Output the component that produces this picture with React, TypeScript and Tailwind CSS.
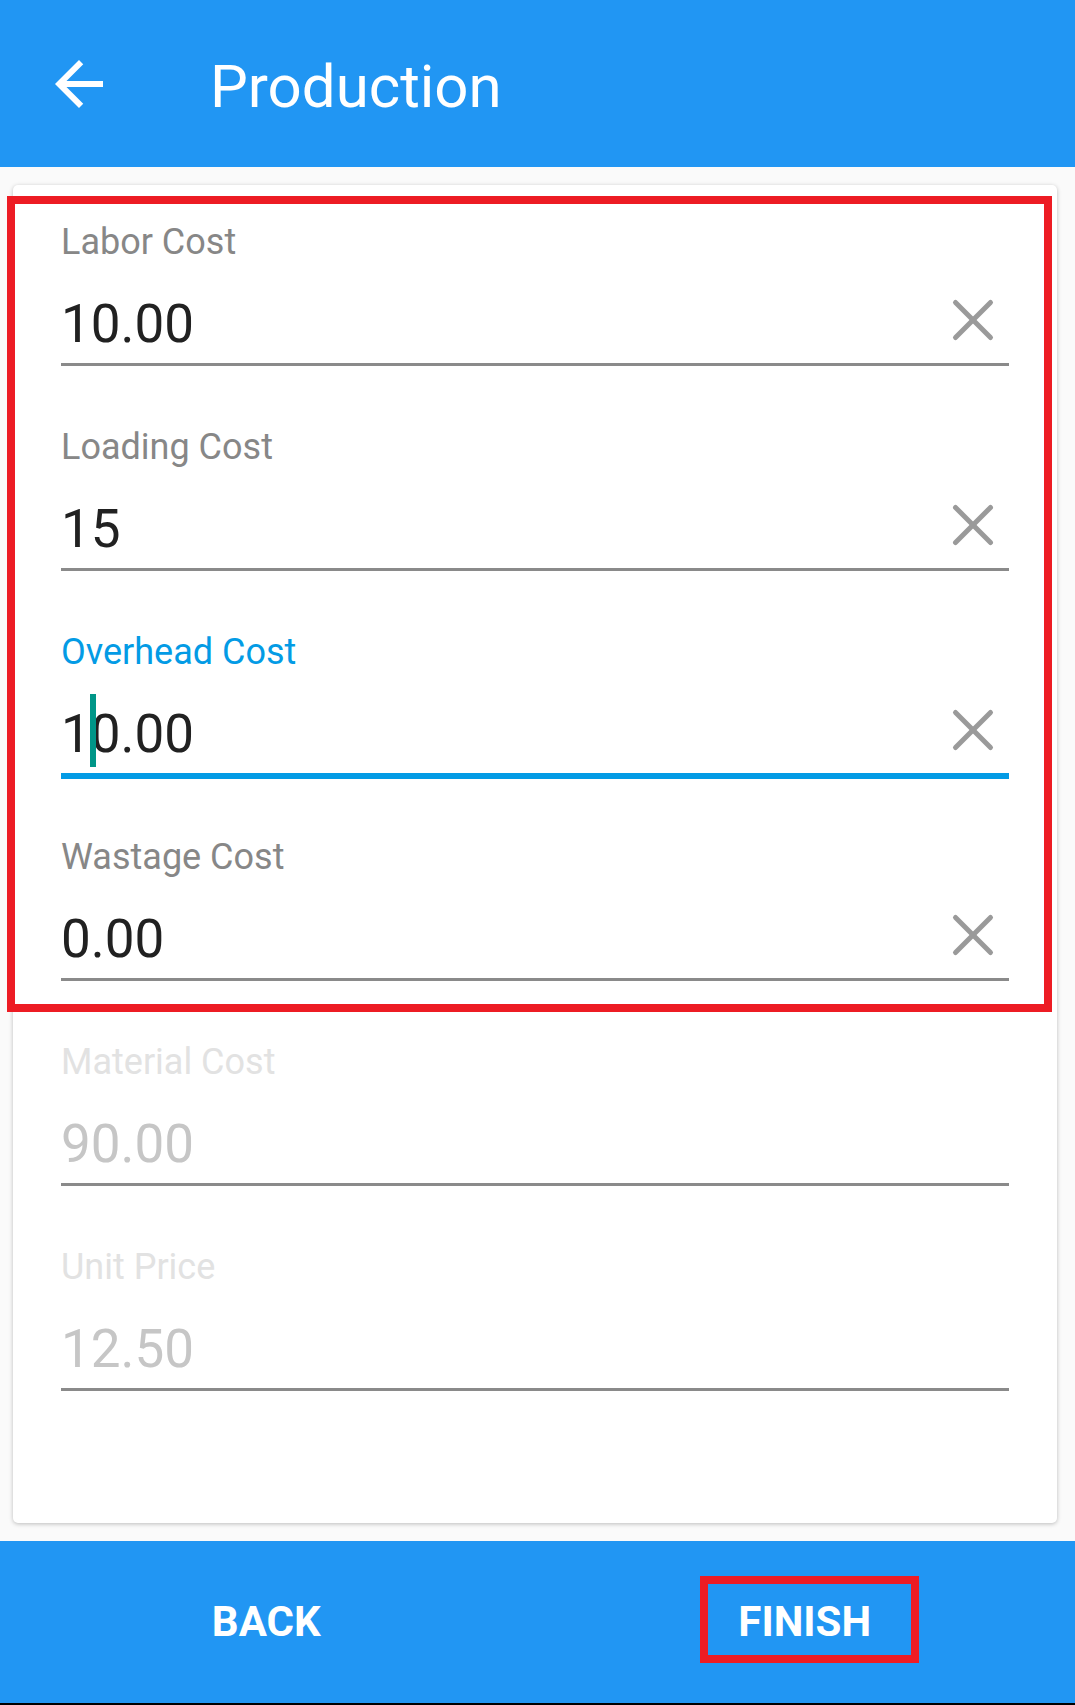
import React from "react";

type FieldProps = {
  label: string;
  value: string;
  focused?: boolean;
  disabled?: boolean;
  cursor?: boolean;
};

function ClearIcon() {
  return (
    <svg width="48" height="48" viewBox="0 0 48 48" className="mt-[2px] mr-[12px] shrink-0">
      <line x1="6.5" y1="6.5" x2="41.5" y2="41.5" stroke="#9a9a9a" strokeWidth="5" strokeLinecap="round" />
      <line x1="41.5" y1="6.5" x2="6.5" y2="41.5" stroke="#9a9a9a" strokeWidth="5" strokeLinecap="round" />
    </svg>
  );
}

function Field({ label, value, focused, disabled, cursor }: FieldProps) {
  const labelColor = disabled ? "text-[#e2e2e2]" : focused ? "text-[#039be5]" : "text-[#878787]";
  const valueColor = disabled ? "text-[#c6c6c6]" : "text-[#212121]";
  return (
    <div className="h-[205px] flex flex-col">
      <div className={`text-[36px] leading-[40px] ${labelColor}`}>{label}</div>
      <div className="mt-[32px] h-[60px] flex items-start">
        <span className={`text-[53px] leading-[60px] ${valueColor}`}>
          {cursor ? (
            <>
              1
              <span className="relative inline-block w-0 h-[60px] align-top">
                <span className="absolute left-[-1px] top-[-10px] w-[6px] h-[73px] bg-[#009688]" />
              </span>
              {value.slice(1)}
            </>
          ) : (
            value
          )}
        </span>
        <div className="flex-1" />
        {!disabled && <ClearIcon />}
      </div>
      <div className="mt-[9px] h-[6px]">
        <div className={focused ? "h-[6px] bg-[#039be5]" : "h-[3px] bg-[#8a8a8a]"} />
      </div>
    </div>
  );
}

export default function App() {
  return (
    <div className="relative w-[1075px] h-[1705px] flex flex-col bg-[#fafafa] font-['Roboto',sans-serif] overflow-hidden">
      {/* Header */}
      <div className="h-[167px] shrink-0 bg-[#2196f3] flex items-start">
        <svg width="72" height="72" viewBox="0 0 24 24" className="ml-[43px] mt-[48px] shrink-0">
          <path d="M20 11H7.83l5.59-5.59L12 4l-8 8 8 8 1.41-1.41L7.83 13H20v-2z" fill="#ffffff" />
        </svg>
        <div className="ml-[95px] mt-[52px] text-[60px] leading-[70px] text-white">Production</div>
      </div>

      {/* Card */}
      <div className="mt-[18px] ml-[13px] mr-[18px] h-[1338px] shrink-0 bg-white rounded-[5px] shadow-[0_1px_4px_rgba(0,0,0,0.25)] pt-[37px] px-[48px] flex flex-col">
        <Field label="Labor Cost" value="10.00" />
        <Field label="Loading Cost" value="15" />
        <Field label="Overhead Cost" value="10.00" focused cursor />
        <Field label="Wastage Cost" value="0.00" />
        <Field label="Material Cost" value="90.00" disabled />
        <Field label="Unit Price" value="12.50" disabled />
      </div>

      {/* Footer */}
      <div className="mt-[18px] h-[162px] shrink-0 bg-[#2196f3] flex relative">
        <div className="flex-1 flex items-center justify-center text-white font-bold text-[42px] leading-[50px] pr-[6px]">BACK</div>
        <div className="flex-1 flex items-center justify-center text-white font-bold text-[42px] leading-[50px] pr-[4px]">FINISH</div>
        <div className="absolute left-[700px] top-[35px] w-[219px] h-[87px] border-[8px] border-[#ed1c24]" />
      </div>
      <div className="h-[2px] shrink-0 bg-black" />

      {/* Annotation box */}
      <div className="absolute left-[7px] top-[196px] w-[1045px] h-[816px] border-[8px] border-[#ed1c24] pointer-events-none" />
    </div>
  );
}
